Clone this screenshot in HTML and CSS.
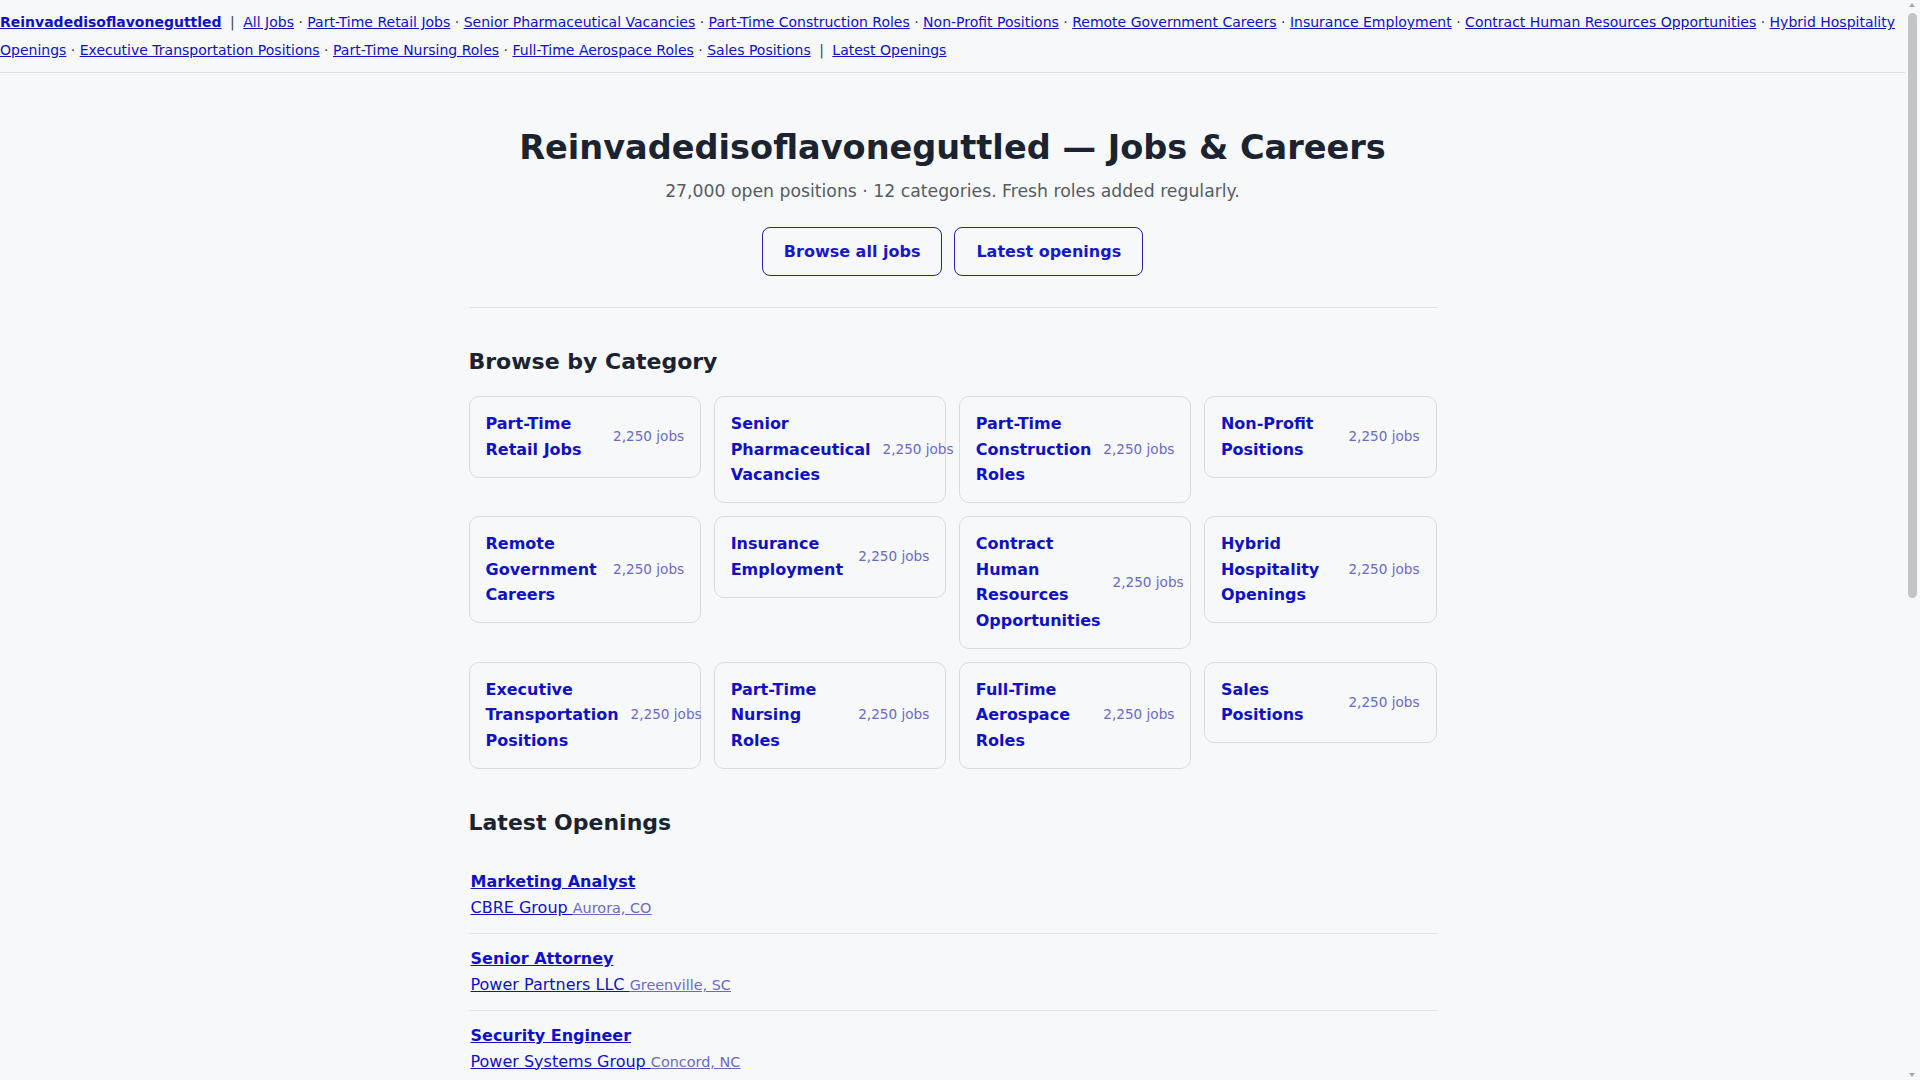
FILE: index.html
```html
<!DOCTYPE html>
<html lang="en">
<head>
<meta charset="utf-8">
<title>Reinvadedisoflavoneguttled — Jobs &amp; Careers</title>
<link rel="stylesheet" href="styles.css">
</head>
<body>
<nav class="topnav">
  <a class="brand" href="#">Reinvadedisoflavoneguttled</a> <span class="bar">|</span> <a href="#">All Jobs</a> · <a href="#">Part-Time Retail Jobs</a> · <a href="#">Senior Pharmaceutical Vacancies</a> · <a href="#">Part-Time Construction Roles</a> · <a href="#">Non-Profit Positions</a> · <a href="#">Remote Government Careers</a> · <a href="#">Insurance Employment</a> · <a href="#">Contract Human Resources Opportunities</a> · <a href="#">Hybrid Hospitality Openings</a> · <a href="#">Executive Transportation Positions</a> · <a href="#">Part-Time Nursing Roles</a> · <a href="#">Full-Time Aerospace Roles</a> · <a href="#">Sales Positions</a> <span class="bar">|</span> <a href="#">Latest Openings</a>
</nav>

<main class="page">
  <header class="hero">
    <h1 class="hero-title">Reinvadedisoflavoneguttled — Jobs &amp; Careers</h1>
    <p class="hero-sub">27,000 open positions · 12 categories. Fresh roles added regularly.</p>
    <div class="hero-actions">
      <a class="btn" href="#">Browse all jobs</a>
      <a class="btn" href="#">Latest openings</a>
    </div>
  </header>

  <section class="section">
    <h2 class="section-title">Browse by Category</h2>
    <div class="cat-grid">
      <a class="cat" href="#"><span class="cat-name">Part-Time Retail Jobs</span><span class="cat-count">2,250 jobs</span></a>
      <a class="cat" href="#"><span class="cat-name">Senior Pharmaceutical Vacancies</span><span class="cat-count">2,250 jobs</span></a>
      <a class="cat" href="#"><span class="cat-name">Part-Time Construction Roles</span><span class="cat-count">2,250 jobs</span></a>
      <a class="cat" href="#"><span class="cat-name">Non-Profit Positions</span><span class="cat-count">2,250 jobs</span></a>
      <a class="cat" href="#"><span class="cat-name">Remote Government Careers</span><span class="cat-count">2,250 jobs</span></a>
      <a class="cat" href="#"><span class="cat-name">Insurance Employment</span><span class="cat-count">2,250 jobs</span></a>
      <a class="cat" href="#"><span class="cat-name">Contract Human Resources Opportunities</span><span class="cat-count">2,250 jobs</span></a>
      <a class="cat" href="#"><span class="cat-name">Hybrid Hospitality Openings</span><span class="cat-count">2,250 jobs</span></a>
      <a class="cat" href="#"><span class="cat-name">Executive Transportation Positions</span><span class="cat-count">2,250 jobs</span></a>
      <a class="cat" href="#"><span class="cat-name">Part-Time Nursing Roles</span><span class="cat-count">2,250 jobs</span></a>
      <a class="cat" href="#"><span class="cat-name">Full-Time Aerospace Roles</span><span class="cat-count">2,250 jobs</span></a>
      <a class="cat" href="#"><span class="cat-name">Sales Positions</span><span class="cat-count">2,250 jobs</span></a>
    </div>
  </section>

  <section class="section">
    <h2 class="section-title">Latest Openings</h2>
    <ul class="jobs">
      <li class="job"><a class="job-title" href="#">Marketing Analyst</a><a class="job-co" href="#">CBRE Group <span class="job-loc">Aurora, CO</span></a></li>
      <li class="job"><a class="job-title" href="#">Senior Attorney</a><a class="job-co" href="#">Power Partners LLC <span class="job-loc">Greenville, SC</span></a></li>
      <li class="job"><a class="job-title" href="#">Security Engineer</a><a class="job-co" href="#">Power Systems Group <span class="job-loc">Concord, NC</span></a></li>
      <li class="job"><a class="job-title" href="#">Registered Nurse</a><a class="job-co" href="#">Summit Health <span class="job-loc">Boise, ID</span></a></li>
      <li class="job"><a class="job-title" href="#">Retail Sales Associate</a><a class="job-co" href="#">Northwind Stores <span class="job-loc">Tulsa, OK</span></a></li>
      <li class="job"><a class="job-title" href="#">Project Manager</a><a class="job-co" href="#">Apex Builders <span class="job-loc">Reno, NV</span></a></li>
      <li class="job"><a class="job-title" href="#">Pharmacy Technician</a><a class="job-co" href="#">CarePoint Pharmacy <span class="job-loc">Dayton, OH</span></a></li>
      <li class="job"><a class="job-title" href="#">HR Coordinator</a><a class="job-co" href="#">BrightPath Inc. <span class="job-loc">Madison, WI</span></a></li>
      <li class="job"><a class="job-title" href="#">Logistics Specialist</a><a class="job-co" href="#">Freight Lines Co. <span class="job-loc">Mesa, AZ</span></a></li>
      <li class="job"><a class="job-title" href="#">Aerospace Engineer</a><a class="job-co" href="#">Skyward Systems <span class="job-loc">Wichita, KS</span></a></li>
      <li class="job"><a class="job-title" href="#">Insurance Agent</a><a class="job-co" href="#">Harbor Mutual <span class="job-loc">Omaha, NE</span></a></li>
      <li class="job"><a class="job-title" href="#">Program Coordinator</a><a class="job-co" href="#">Open Hands Foundation <span class="job-loc">Eugene, OR</span></a></li>
    </ul>
  </section>
</main>

<footer class="footer">
  <p>© Reinvadedisoflavoneguttled · Jobs &amp; Careers</p>
</footer>

<div class="scrollbar" aria-hidden="true">
  <span class="sb-arrow sb-up"></span>
  <span class="sb-thumb"></span>
  <span class="sb-arrow sb-down"></span>
</div>
</body>
</html>
```

FILE: styles.css
```css
html, body {
  margin: 0;
  padding: 0;
}
body {
  margin-right: 15px;
  background: #f6f8fa;
  color: #1b2330;
  font-family: "DejaVu Sans", Verdana, sans-serif;
  font-size: 16px;
  line-height: 1.6;
}
a {
  color: #1010c4;
}

.topnav {
  font-size: 14px;
  line-height: 28px;
  padding: 8px 0;
  border-bottom: 1px solid #dde1e6;
  color: #333;
}
.topnav .brand {
  font-weight: bold;
}
.topnav .bar {
  margin: 0 4px;
  color: #444;
}

.page {
  max-width: 1000px;
  margin: 0 auto;
  padding: 0 16px;
  box-sizing: border-box;
}

.hero {
  text-align: center;
  padding: 55px 0 31px;
  border-bottom: 1px solid #dde1e6;
}
.hero-title {
  margin: 0;
  font-size: 33.6px;
  line-height: 1.2;
  font-weight: bold;
  color: #1b2330;
}
.hero-sub {
  margin: 11px 0 0;
  font-size: 17.25px;
  line-height: 1.5;
  color: #555b63;
}
.hero-actions {
  margin-top: 22px;
  display: flex;
  justify-content: center;
  gap: 12px;
}
.btn {
  display: inline-block;
  padding: 11.5px 21px;
  border: 1px solid #2222b0;
  border-radius: 8px;
  font-size: 16px;
  line-height: 24px;
  font-weight: bold;
  text-decoration: none;
  color: #1818c8;
}

.section-title {
  margin: 40px 0 19px;
  font-size: 22px;
  line-height: 1.3;
  font-weight: bold;
  color: #1b2330;
}

.cat-grid {
  display: grid;
  grid-template-columns: repeat(4, minmax(0, 1fr));
  gap: 12.5px;
  align-items: start;
}
.cat {
  display: flex;
  align-items: center;
  justify-content: space-between;
  gap: 12px;
  padding: 14.4px 16px;
  border: 1px solid #d8dce2;
  border-radius: 10px;
  text-decoration: none;
  color: #1010c4;
}
.cat-name {
  font-weight: bold;
  font-size: 16px;
  line-height: 1.6;
}
.cat-count {
  white-space: nowrap;
  font-size: 13.6px;
  color: #6a6ac6;
}

.jobs {
  list-style: none;
  margin: 0;
  padding: 0;
}
.job {
  padding: 12px 2px;
  line-height: 26px;
  border-bottom: 1px solid #dfe3e8;
}
.job-title {
  display: block;
  font-weight: bold;
  width: max-content;
}
.job-co {
  display: inline-block;
}
.job-loc {
  font-size: 14.4px;
  color: #6a6ac6;
  text-decoration: underline;
}

.footer {
  max-width: 1000px;
  margin: 0 auto;
  padding: 40px 16px 80px;
  box-sizing: border-box;
  font-size: 14px;
  color: #666;
}

/* drawn scrollbar overlay, matching the browser chrome in the reference */
.scrollbar {
  position: fixed;
  top: 0;
  right: 0;
  width: 15px;
  height: 100vh;
  background: #f6f8fa;
}
.sb-thumb {
  position: absolute;
  top: 13px;
  left: 3px;
  width: 9px;
  height: 585px;
  border-radius: 5px;
  background: #c2c4c7;
}
.sb-arrow {
  position: absolute;
  left: 4px;
  width: 0;
  height: 0;
  border-left: 3.5px solid transparent;
  border-right: 3.5px solid transparent;
}
.sb-up {
  top: 3px;
  border-bottom: 4px solid #a4a6a9;
}
.sb-down {
  bottom: 3px;
  border-top: 4px solid #a4a6a9;
}
```
